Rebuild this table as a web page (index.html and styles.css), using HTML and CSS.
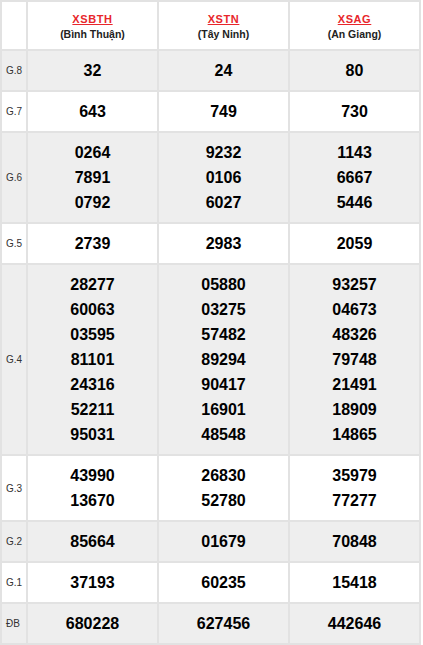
FILE: index.html
```html
<!DOCTYPE html>
<html lang="vi">
<head>
<meta charset="utf-8">
<title>KQXS</title>
<link rel="stylesheet" href="styles.css">
</head>
<body>
<table class="kq">
  <colgroup>
    <col class="c-label">
    <col class="c-prov">
    <col class="c-prov">
    <col class="c-prov">
  </colgroup>
  <thead>
    <tr class="head">
      <th></th>
      <th><a class="code">XSBTH</a><div class="prov">(Bình Thuận)</div></th>
      <th><a class="code">XSTN</a><div class="prov">(Tây Ninh)</div></th>
      <th><a class="code">XSAG</a><div class="prov">(An Giang)</div></th>
    </tr>
  </thead>
  <tbody>
    <tr class="alt"><td class="lbl">G.8</td><td><div>32</div></td><td><div>24</div></td><td><div>80</div></td></tr>
    <tr><td class="lbl">G.7</td><td><div>643</div></td><td><div>749</div></td><td><div>730</div></td></tr>
    <tr class="alt"><td class="lbl">G.6</td>
      <td><div>0264</div><div>7891</div><div>0792</div></td>
      <td><div>9232</div><div>0106</div><div>6027</div></td>
      <td><div>1143</div><div>6667</div><div>5446</div></td></tr>
    <tr><td class="lbl">G.5</td><td><div>2739</div></td><td><div>2983</div></td><td><div>2059</div></td></tr>
    <tr class="alt"><td class="lbl">G.4</td>
      <td><div>28277</div><div>60063</div><div>03595</div><div>81101</div><div>24316</div><div>52211</div><div>95031</div></td>
      <td><div>05880</div><div>03275</div><div>57482</div><div>89294</div><div>90417</div><div>16901</div><div>48548</div></td>
      <td><div>93257</div><div>04673</div><div>48326</div><div>79748</div><div>21491</div><div>18909</div><div>14865</div></td></tr>
    <tr><td class="lbl">G.3</td>
      <td><div>43990</div><div>13670</div></td>
      <td><div>26830</div><div>52780</div></td>
      <td><div>35979</div><div>77277</div></td></tr>
    <tr class="alt"><td class="lbl">G.2</td><td><div>85664</div></td><td><div>01679</div></td><td><div>70848</div></td></tr>
    <tr><td class="lbl">G.1</td><td><div>37193</div></td><td><div>60235</div></td><td><div>15418</div></td></tr>
    <tr class="alt"><td class="lbl">ĐB</td><td><div>680228</div></td><td><div>627456</div></td><td><div>442646</div></td></tr>
  </tbody>
</table>
</body>
</html>
```

FILE: styles.css
```css
html, body {
  margin: 0;
  padding: 0;
  background: #fff;
}
body {
  font-family: "Liberation Sans", Arial, sans-serif;
  color: #000;
}
.kq {
  width: 421px;
  border-collapse: collapse;
  table-layout: fixed;
}
.c-label { width: 26px; }
.kq th, .kq td {
  border: 2px solid #e2e2e2;
  text-align: center;
  vertical-align: middle;
  padding: 0;
}
.head th {
  height: 47px;
  background: #fff;
}
.code {
  display: inline-block;
  color: #e8262b;
  font-weight: bold;
  font-size: 11px;
  letter-spacing: 0.6px;
  text-decoration: underline;
  line-height: 14px;
  margin-top: -1px;
}
.prov {
  font-size: 10.5px;
  font-weight: bold;
  color: #222;
  line-height: 15px;
}
.kq tbody td {
  padding: 7px 0 7px;
  font-size: 16px;
  font-weight: bold;
  line-height: 25px;
  background: #fff;
}
.kq tbody tr.alt td {
  background: #eeeeee;
}
.kq tbody td.lbl {
  text-align: left;
  padding: 0 0 0 4px;
  font-size: 10px;
  font-weight: normal;
  color: #333;
}
```
